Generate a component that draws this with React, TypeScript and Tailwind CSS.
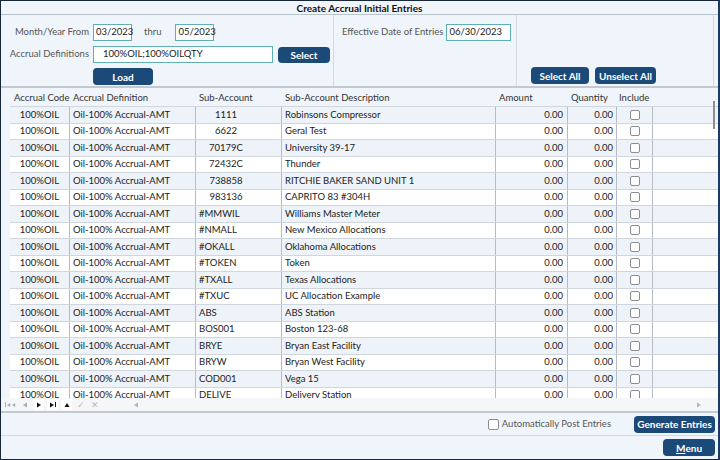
import React from 'react'

const ROWS: [string, string, boolean][] = [
  ['1111', 'Robinsons Compressor', true],
  ['6622', 'Geral Test', true],
  ['70179C', 'University 39-17', true],
  ['72432C', 'Thunder', true],
  ['738858', 'RITCHIE BAKER SAND UNIT 1', true],
  ['983136', 'CAPRITO 83 #304H', true],
  ['#MMWIL', 'Williams Master Meter', false],
  ['#NMALL', 'New Mexico Allocations', false],
  ['#OKALL', 'Oklahoma Allocations', false],
  ['#TOKEN', 'Token', false],
  ['#TXALL', 'Texas Allocations', false],
  ['#TXUC', 'UC Allocation Example', false],
  ['ABS', 'ABS Station', false],
  ['BOS001', 'Boston 123-68', false],
  ['BRYE', 'Bryan East Facility', false],
  ['BRYW', 'Bryan West Facility', false],
  ['COD001', 'Vega 15', false],
  ['DELIVE', 'Delivery Station', false],
]

const COLS = 'grid grid-cols-[60px_126px_86px_214px_72px_49px_36px]'

const Btn = ({ children, className = '' }: any) => (
  <button className={`bg-[#1c4a78] text-white font-bold rounded-[4px] text-[10px] leading-none flex items-center justify-center ${className}`}>
    {children}
  </button>
)

const Input = ({ value, className = '' }: any) => (
  <div className={`h-[17px] bg-white border border-[#5fb0b4] flex items-center text-[#222] ${className}`}>{value}</div>
)

const Box = () => <div className="w-[10px] h-[10px] border border-[#8a8f95] rounded-[2px] bg-white" />

const Tri = ({ dir, color = '#111' }: { dir: 'l' | 'r' | 'u'; color?: string }) => (
  <svg width="6" height="6" viewBox="0 0 6 6">
    {dir === 'l' && <path d="M5 0.5 L1 3 L5 5.5Z" fill={color} />}
    {dir === 'r' && <path d="M1 0.5 L5 3 L1 5.5Z" fill={color} />}
    {dir === 'u' && <path d="M0.5 5 L3 1 L5.5 5Z" fill={color} />}
  </svg>
)

export default function App() {
  return (
    <div className="w-[720px] h-[460px] border border-[#17273b] border-r-2 border-r-[#1c3a66] bg-[#eff5fb] flex flex-col text-[9.5px] text-[#333] font-['Lato',sans-serif] whitespace-nowrap overflow-hidden">
      {/* title */}
      <div className="h-[14px] border-b border-[#b9c3cc] flex items-center justify-center font-bold text-[10px] text-[#111] leading-none">
        Create Accrual Initial Entries
      </div>

      {/* header panel */}
      <div className="h-[73px] flex border-b-2 border-[#c3c9cf]">
        <div className="w-[333px] border-r border-[#d3d9df] pt-[9px]">
          <div className="flex items-center h-[17px]">
            <span className="w-[88px] text-right text-[#555]">Month/Year From</span>
            <Input value="03/2023" className="ml-[4px] w-[39px] pl-[2px]" />
            <span className="ml-[12px] text-[#555]">thru</span>
            <Input value="05/2023" className="ml-[14px] w-[39px] pl-[2px]" />
          </div>
          <div className="flex items-center h-[17px] mt-[5px]">
            <span className="w-[88px] text-right text-[#555]">Accrual Definitions</span>
            <Input value="100%OIL;100%OILQTY" className="ml-[4px] w-[180px] pl-[9px]" />
            <Btn className="ml-[5px] w-[52px] h-[16px]">Select</Btn>
          </div>
          <Btn className="ml-[92px] mt-[5px] w-[60px] h-[17px]">Load</Btn>
        </div>
        <div className="w-[183px] border-r border-[#d3d9df] pt-[9px] pl-[8px]">
          <div className="flex items-center h-[17px]">
            <span className="text-[#555]">Effective Date of Entries</span>
            <Input value="06/30/2023" className="ml-[3px] w-[65px] pl-[2px]" />
          </div>
        </div>
        <div className="w-[197px] border-r border-[#d3d9df] flex items-end gap-[6px] pl-[14px] pb-[2px]">
          <Btn className="w-[58px] h-[17px]">Select All</Btn>
          <Btn className="w-[61px] h-[17px]">Unselect All</Btn>
        </div>
      </div>

      {/* grid */}
      <div className="h-[310px] relative pl-[9px] overflow-hidden">
        <div className={`${COLS} h-[18px] pt-[2px] items-center text-[#333]`}>
          <span className="pl-[4px]">Accrual Code</span>
          <span className="pl-[3px]">Accrual Definition</span>
          <span className="pl-[3px]">Sub-Account</span>
          <span className="pl-[3px]">Sub-Account Description</span>
          <span className="pl-[3px]">Amount</span>
          <span className="pl-[3px]">Quantity</span>
          <span className="pl-[2px]">Include</span>
        </div>
        {ROWS.map(([acct, desc, num], i) => (
          <div
            key={acct}
            className={`${COLS} h-[16.5px] items-stretch text-[#222] border-t border-[#cfd6dd] ${i % 2 === 0 ? 'bg-[#edf3f8]' : 'bg-white'}`}
          >
            <span className="flex items-center justify-center border-r border-[#b4bcc4]">100%OIL</span>
            <span className="flex items-center pl-[3px] border-r border-[#b4bcc4]">Oil-100% Accrual-AMT</span>
            <span className="flex items-center pl-[3px] border-r border-[#b4bcc4]">
              {num ? <span className="w-[54px] text-center">{acct}</span> : acct}
            </span>
            <span className="flex items-center pl-[3px] border-r border-[#b4bcc4]">{desc}</span>
            <span className="flex items-center justify-end pr-[4px] border-r border-[#b4bcc4]">0.00</span>
            <span className="flex items-center justify-end pr-[3px] border-r border-[#b4bcc4]">0.00</span>
            <span className="flex items-center justify-center border-r border-[#b4bcc4]"><Box /></span>
          </div>
        ))}
        {/* vertical scrollbar */}
        <div className="absolute right-[3px] top-[13px] w-[2px] h-[28px] bg-[#8a8f95]" />
      </div>

      {/* navigator */}
      <div className="h-[13px] bg-[#f4f6f8] flex items-center pl-[4px] gap-[3px] border-b-2 border-[#c3c9cf] box-content">
        <span className="w-[11px] flex justify-center items-center gap-0"><span className="w-[1px] h-[5px] bg-[#aab]" /><Tri dir="l" color="#aab" /><Tri dir="l" color="#aab" /></span>
        <span className="w-[11px] flex justify-center"><Tri dir="l" color="#aab" /></span>
        <span className="w-[11px] h-[11px] bg-white flex justify-center items-center"><Tri dir="r" /></span>
        <span className="w-[11px] h-[11px] bg-white flex justify-center items-center"><Tri dir="r" /><span className="w-[1px] h-[5px] bg-[#111]" /></span>
        <span className="w-[11px] h-[11px] bg-white flex justify-center items-center"><Tri dir="u" /></span>
        <span className="w-[11px] flex justify-center text-[#b8bcc0] text-[9px] leading-none">✓</span>
        <span className="w-[11px] flex justify-center text-[#b8bcc0] text-[9px] leading-none">✕</span>
        <span className="ml-[30px]"><Tri dir="l" color="#b0b4b8" /></span>
        <span className="ml-auto mr-[16px]"><Tri dir="r" color="#b0b4b8" /></span>
      </div>

      {/* footer */}
      <div className="h-[23px] flex items-center justify-end border-b border-[#d3d9df]">
        <div className="flex items-center gap-[3px] mr-[23px] text-[#555]">
          <div className="w-[11px] h-[11px] border border-[#8a8f95] rounded-[2px] bg-white" />
          <span>Automatically Post Entries</span>
        </div>
        <Btn className="w-[81px] h-[17px] mr-[3px]">Generate Entries</Btn>
      </div>
      <div className="flex-1 flex items-center justify-end">
        <Btn className="w-[52px] h-[17px] mr-[3px]"><span className="underline">M</span>enu</Btn>
      </div>
    </div>
  )
}
